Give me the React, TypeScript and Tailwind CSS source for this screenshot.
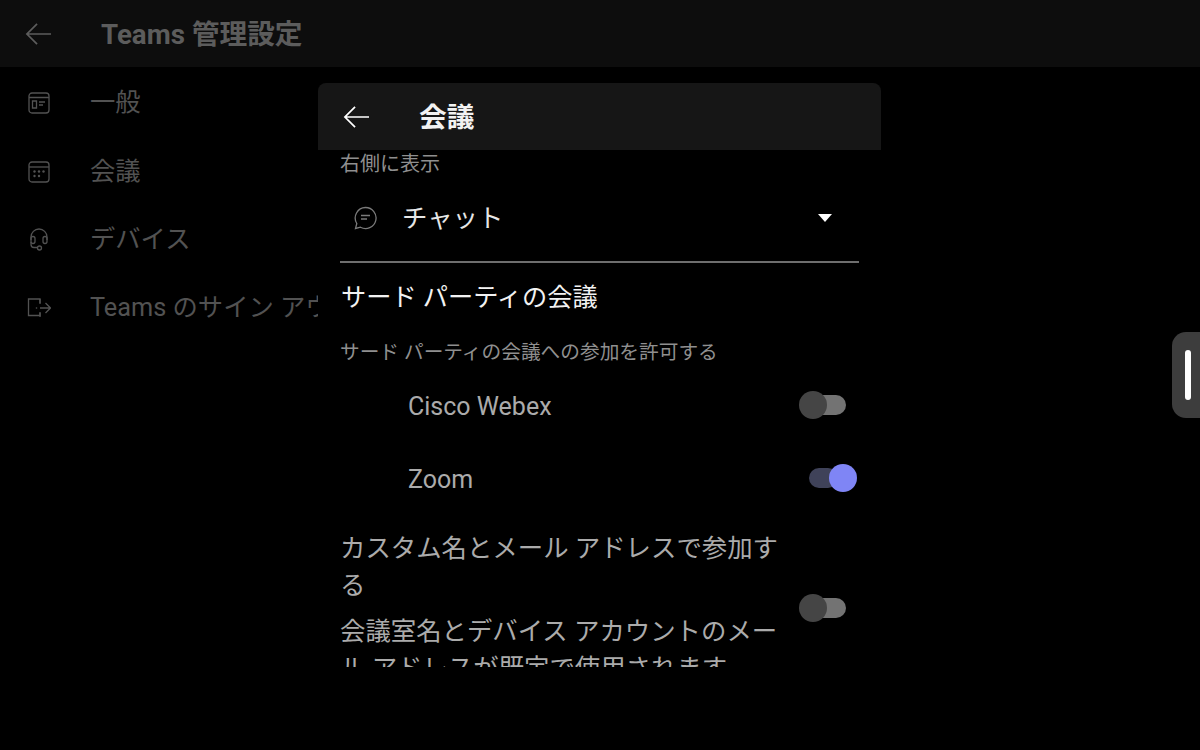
import React from 'react';

const font = { fontFamily: 'Roboto, "Noto Sans CJK JP", sans-serif' };

const BackArrow = ({ className }: { className: string }) => (
  <svg viewBox="0 0 28 24" className={className} fill="none" stroke="currentColor" strokeWidth="1.8">
    <path d="M27 12H2M12.5 1.5 2 12l10.5 10.5" />
  </svg>
);

const GeneralIcon = () => (
  <svg viewBox="0 0 22 22" className="h-[22px] w-[22px]" fill="none" stroke="currentColor" strokeWidth="1.3">
    <rect x="1" y="1" width="20" height="20" rx="3" />
    <path d="M1 5.500h20M4.500 9h4v7h-4zM11 10h6M11 13h4" />
  </svg>
);

const CalendarIcon = () => (
  <svg viewBox="0 0 22 22" className="h-[22px] w-[22px]" fill="none" stroke="currentColor" strokeWidth="1.3">
    <rect x="1" y="1" width="20" height="20" rx="3" />
    <path d="M1 6h20" />
    <g fill="currentColor" stroke="none">
      <circle cx="6.500" cy="10.500" r="1.200" />
      <circle cx="11" cy="10.500" r="1.200" />
      <circle cx="15.500" cy="10.500" r="1.200" />
      <circle cx="6.500" cy="15" r="1.200" />
      <circle cx="11" cy="15" r="1.200" />
    </g>
  </svg>
);

const HeadsetIcon = () => (
  <svg viewBox="0 0 22 24" className="h-[24px] w-[22px]" fill="none" stroke="currentColor" strokeWidth="1.3">
    <path d="M3 12V9a8 8 0 0 1 16 0v3" />
    <rect x="3" y="8.500" width="4" height="7" rx="2" />
    <rect x="15" y="8.500" width="4" height="7" rx="2" />
    <path d="M3 14v2.500a3 3 0 0 0 3 3h3.500" />
    <circle cx="11.500" cy="20" r="2" />
  </svg>
);

const SignOutIcon = () => (
  <svg viewBox="0 0 24 20" className="h-[20px] w-[24px]" fill="none" stroke="currentColor" strokeWidth="1.3">
    <path d="M13 5V1H1.500v16.500H13V14" />
    <path d="M13 1v18" strokeDasharray="5 9" />
    <path d="M13 10h10M18.500 5l5 5-5 5" />
    <circle cx="9.500" cy="10" r=".8" fill="currentColor" stroke="none" />
  </svg>
);

const ChatIcon = () => (
  <svg viewBox="0 0 24 24" className="h-6 w-6" fill="none" stroke="#7a7a7a" strokeWidth="1.3">
    <path d="M12.500 1.500a10.500 10.500 0 1 1-5 19.700l-5 1.300 1.300-5a10.500 10.500 0 0 1 8.700-16z" />
    <path d="M8 9.500h9M8 13h6" />
  </svg>
);

const Toggle = ({ on = false }: { on?: boolean }) =>
  on ? (
    <div className="flex w-12 items-center">
      <div className="h-5 w-8 rounded-full bg-[#3f4259]" />
      <div className="-ml-[9px] h-7 w-7 shrink-0 rounded-full bg-[#7f85f5]" />
    </div>
  ) : (
    <div className="flex w-12 items-center">
      <div className="z-10 h-7 w-7 shrink-0 rounded-full bg-[#454545]" />
      <div className="-ml-[9px] h-5 w-7 rounded-r-full bg-[#737373]" />
    </div>
  );

const navItems = [
  { label: '一般', icon: <GeneralIcon /> },
  { label: '会議', icon: <CalendarIcon /> },
  { label: 'デバイス', icon: <HeadsetIcon /> },
  { label: 'Teams のサイン アウト', icon: <SignOutIcon /> },
];

export default function App() {
  return (
    <div style={font} className="relative h-[750px] w-[1200px] overflow-hidden bg-black">
      <header className="flex h-[67px] items-center bg-[#0d0d0d] pl-[25px] text-[#5c5c5c]">
        <BackArrow className="h-[24px] w-[27px]" />
        <h1 className="ml-[49px] pt-[3px] text-[27.7px] font-bold">Teams 管理設定</h1>
      </header>

      <nav className="w-[318px] overflow-hidden pt-[2px] text-[#525252]">
        {navItems.map(item => (
          <div key={item.label} className="flex h-[68.4px] items-center whitespace-nowrap">
            <div className="flex w-[78px] shrink-0 justify-center">{item.icon}</div>
            <span className="ml-[12px] text-[25.3px]">{item.label}</span>
          </div>
        ))}
      </nav>

      <div className="absolute left-[318px] top-[83px] h-[584px] w-[563px] overflow-hidden rounded-t-lg bg-black">
        <div className="flex h-[67px] items-center bg-[#161616] pl-[25px] text-white">
          <BackArrow className="h-[24px] w-[27px]" />
          <h2 className="ml-[49px] pt-[2px] text-[27.7px] font-bold text-[#f2f2f2]">会議</h2>
        </div>

        <div className="px-[22px]">
          <p className="text-[20px] leading-[28px] text-[#8f8f8f]">右側に表示</p>
          <div className="flex h-[85px] w-[519px] items-center border-b-2 border-[#6e6e6e] pb-[3px] pr-[27px]">
            <div className="ml-[13px]"><ChatIcon /></div>
            <span className="ml-[25px] flex-1 text-[25.4px] text-[#e6e6e6]">チャット</span>
            <svg viewBox="0 0 14 9" className="h-[9px] w-[14px]" fill="#ffffff">
              <path d="M0 0h14L7 8z" />
            </svg>
          </div>

          <h3 className="mt-[17px] pl-[1px] text-[25.2px] leading-[36px] text-[#f2f2f2]">サード パーティの会議</h3>
          <p className="mt-[23px] text-[19.7px] leading-[28px] text-[#8f8f8f]">サード パーティの会議への参加を許可する</p>

          <div className="mt-[2px] flex h-[72px] w-[519px] items-center justify-between pl-[68px] pr-[12px] text-[25px] text-[#ababab]">
            <span className="mt-[4px]">Cisco Webex</span>
            <Toggle />
          </div>
          <div className="flex h-[73px] w-[519px] items-center justify-between pl-[68px] pr-[2px] text-[25px] text-[#ababab]">
            <span className="mt-[4px]">Zoom</span>
            <Toggle on />
          </div>

          <div className="mt-[16px] flex w-[519px] items-center justify-between pr-[12px]">
            <div className="w-[440px] text-[25.4px] leading-[37px] text-[#ababab]">
              <p>カスタム名とメール アドレスで参加する</p>
              <p className="mt-[9px]">会議室名とデバイス アカウントのメール アドレスが既定で使用されます</p>
            </div>
            <div className="mb-[2px]"><Toggle /></div>
          </div>
        </div>
      </div>

      <div className="absolute right-0 top-[332px] flex h-[86px] w-[28px] items-center rounded-l-[14px] bg-[#3d3d3d] pl-[13px]">
        <div className="h-[50px] w-[6px] rounded-full bg-white" />
      </div>
    </div>
  );
}
